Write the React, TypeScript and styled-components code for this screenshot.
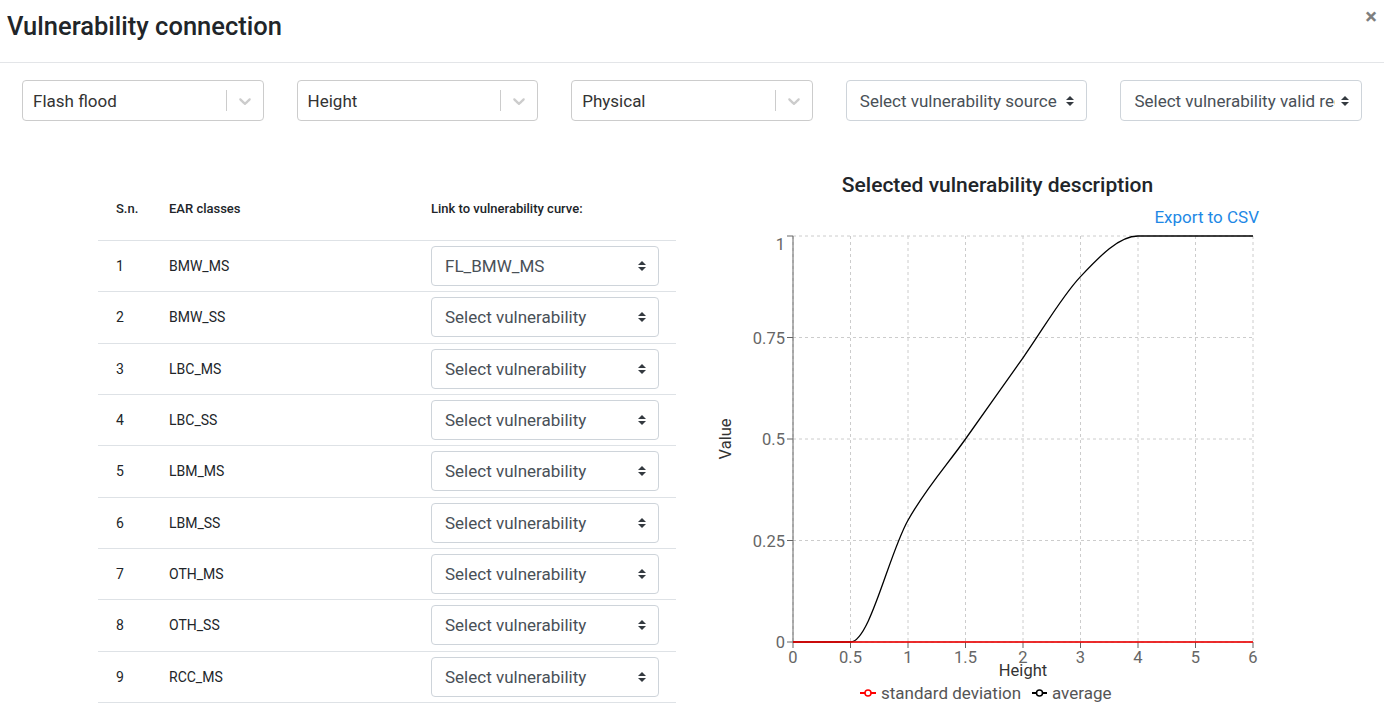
import React from "react";
import styled, { createGlobalStyle } from "styled-components";

const Global = createGlobalStyle`
  html, body { margin: 0; padding: 0; background: #fff; }
  body { font-family: Roboto, "Liberation Sans", sans-serif; color: #212529; overflow: hidden; }
  * { box-sizing: border-box; }
`;

const Page = styled.div`
  width: 1384px;
  height: 703px;
  overflow: hidden;
`;

const Header = styled.div`
  height: 63px;
  display: flex;
  justify-content: space-between;
  align-items: flex-start;
  padding: 0 7px;
  border-bottom: 1px solid #e3e5e8;
`;

const Title = styled.h1`
  margin: 0;
  padding-top: 10px;
  font-size: 25.5px;
  line-height: 32px;
  font-weight: 500;
  color: #212529;
`;

const Close = styled.span`
  padding-top: 6px;
  font-size: 22px;
  line-height: 1;
  font-weight: 700;
  color: #000;
  opacity: 0.5;
`;

const FilterBar = styled.div`
  display: grid;
  grid-template-columns: repeat(5, minmax(0, 1fr));
  gap: 33px;
  padding: 17px 22px 0;
`;

const Control = styled.div`
  height: 41px;
  display: flex;
  align-items: center;
  border: 1px solid hsl(0, 0%, 80%);
  border-radius: 4px;
  background: #fff;
`;

const ControlValue = styled.div`
  flex: 1;
  padding-left: 10px;
  font-size: 17px;
  color: hsl(0, 0%, 20%);
  white-space: nowrap;
  overflow: hidden;
`;

const Separator = styled.span`
  width: 1px;
  align-self: stretch;
  margin: 9px 0;
  background: hsl(0, 0%, 80%);
`;

const Indicator = styled.div`
  display: flex;
  padding: 8px;
  color: hsl(0, 0%, 80%);
`;

const NativeSelect = styled.div<{ $h: number }>`
  height: ${(p) => p.$h}px;
  display: flex;
  align-items: center;
  padding: 0 12px 0 13px;
  border: 1px solid #ced4da;
  border-radius: 4px;
  background: #fff;
  font-size: 17px;
  color: #495057;
  min-width: 0;
`;

const NativeText = styled.span`
  flex: 1;
  min-width: 0;
  margin-right: 6px;
  white-space: nowrap;
  overflow: hidden;
`;

const Content = styled.div`
  display: flex;
  align-items: flex-start;
  padding-left: 98px;
`;

const Table = styled.div`
  width: 578px;
  margin-top: 67px;
`;

const Row = styled.div<{ $head?: boolean }>`
  display: grid;
  grid-template-columns: 53px 262px 1fr;
  align-items: ${(p) => (p.$head ? "start" : "center")};
  height: ${(p) => (p.$head ? "53px" : "51.33px")};
  padding: ${(p) => (p.$head ? "12px 17px 0 18px" : "0 17px 0 18px")};
  border-bottom: 1px solid #dee2e6;
  font-size: ${(p) => (p.$head ? "13px" : "14px")};
  font-weight: ${(p) => (p.$head ? 500 : 400)};
  line-height: 18px;
  color: #212529;
`;

const ChartCol = styled.div`
  width: 585px;
  margin-left: 29px;
  margin-top: 52px;
  display: flex;
  flex-direction: column;
`;

const ChartTitle = styled.div`
  text-align: center;
  font-size: 21px;
  line-height: 24px;
  font-weight: 500;
  color: #212529;
`;

const Export = styled.a`
  align-self: flex-end;
  margin: 10px 31px 0 0;
  font-size: 17px;
  line-height: 20px;
  color: #1e88e5;
  text-decoration: none;
`;

const Arrows = () => (
  <svg width="8" height="12" viewBox="0 0 8 12" style={{ flex: "none" }}>
    <path d="M0 5 L4 1 L8 5 Z M0 7 L8 7 L4 11 Z" fill="#343a40" />
  </svg>
);

const Chevron = () => (
  <svg width="20" height="20" viewBox="0 0 20 20" fill="currentColor">
    <path d="M4.516 7.548c0.436-0.446 1.043-0.481 1.576 0l3.908 3.747 3.908-3.747c0.533-0.481 1.141-0.446 1.574 0 0.436 0.445 0.408 1.197 0 1.615-0.409 0.418-4.695 4.502-4.695 4.502-0.217 0.223-0.502 0.335-0.787 0.335s-0.57-0.112-0.789-0.335c0 0-4.287-4.084-4.695-4.502s-0.436-1.17 0-1.615z" />
  </svg>
);

const ReactSelect = ({ value }: { value: string }) => (
  <Control>
    <ControlValue>{value}</ControlValue>
    <Separator />
    <Indicator>
      <Chevron />
    </Indicator>
  </Control>
);

const Native = ({ value, h }: { value: string; h: number }) => (
  <NativeSelect $h={h}>
    <NativeText>{value}</NativeText>
    <Arrows />
  </NativeSelect>
);

const classes = ["BMW_MS", "BMW_SS", "LBC_MS", "LBC_SS", "LBM_MS", "LBM_SS", "OTH_MS", "OTH_SS", "RCC_MS"];

const cats = ["0", "0.5", "1", "1.5", "2", "3", "4", "5", "6"];
const avg = [0, 0, 0.3, 0.5, 0.7, 0.9, 1, 1, 1];
const X0 = 88;
const STEP = 57.5;
const YT = 9;
const YB = 415;
const px = (i: number) => X0 + i * STEP;
const py = (v: number) => YB - v * (YB - YT);

function monotonePath(xs: number[], ys: number[]) {
  const n = xs.length;
  const sign = (v: number) => (v < 0 ? -1 : 1);
  const t: number[] = new Array(n).fill(0);
  for (let i = 1; i < n - 1; i++) {
    const h0 = xs[i] - xs[i - 1];
    const h1 = xs[i + 1] - xs[i];
    const s0 = (ys[i] - ys[i - 1]) / h0;
    const s1 = (ys[i + 1] - ys[i]) / h1;
    const p = (s0 * h1 + s1 * h0) / (h0 + h1);
    t[i] = (sign(s0) + sign(s1)) * Math.min(Math.abs(s0), Math.abs(s1), 0.5 * Math.abs(p)) || 0;
  }
  const hs = xs[1] - xs[0];
  t[0] = (3 * (ys[1] - ys[0]) / hs - t[1]) / 2;
  const he = xs[n - 1] - xs[n - 2];
  t[n - 1] = (3 * (ys[n - 1] - ys[n - 2]) / he - t[n - 2]) / 2;
  let d = `M${xs[0]},${ys[0]}`;
  for (let i = 0; i < n - 1; i++) {
    const dx = (xs[i + 1] - xs[i]) / 3;
    d += ` C${xs[i] + dx},${ys[i] + dx * t[i]} ${xs[i + 1] - dx},${ys[i + 1] - dx * t[i + 1]} ${xs[i + 1]},${ys[i + 1]}`;
  }
  return d;
}

const Chart = () => {
  const xs = cats.map((_, i) => px(i));
  const ys = avg.map(py);
  const yTicks = [0, 0.25, 0.5, 0.75, 1];
  const font = { fontFamily: "Roboto, 'Liberation Sans', sans-serif", fontSize: 16.5 };
  const legendFont = { fontFamily: "Roboto, 'Liberation Sans', sans-serif", fontSize: 17 };
  return (
    <svg width="585" height="475" viewBox="0 0 585 475" style={{ display: "block" }}>
      {yTicks.map((v) => (
        <line key={"h" + v} x1={X0} x2={px(8)} y1={py(v)} y2={py(v)} stroke="#ccc" strokeDasharray="3 3" />
      ))}
      {cats.map((c, i) => (
        <line key={"v" + c} x1={px(i)} x2={px(i)} y1={YT} y2={YB} stroke="#ccc" strokeDasharray="3 3" />
      ))}
      <line x1={X0} x2={X0} y1={YT} y2={YB} stroke="#666" />
      <line x1={X0} x2={px(8)} y1={YB} y2={YB} stroke="#666" />
      {yTicks.map((v) => (
        <g key={"t" + v}>
          <line x1={X0 - 6} x2={X0} y1={py(v)} y2={py(v)} stroke="#666" />
          <text x={X0 - 8} y={py(v) + (v === 1 ? 14 : 6)} textAnchor="end" fill="#666" {...font}>
            {String(v)}
          </text>
        </g>
      ))}
      {cats.map((c, i) => (
        <g key={"x" + c}>
          <line x1={px(i)} x2={px(i)} y1={YB} y2={YB + 6} stroke="#666" />
          <text x={px(i)} y={436} textAnchor="middle" fill="#666" {...font}>
            {c}
          </text>
        </g>
      ))}
      <text x={318} y={449} textAnchor="middle" fill="#333" {...font}>Height</text>
      <text x={0} y={0} transform="translate(26,212) rotate(-90)" textAnchor="middle" fill="#333" {...font}>
        Value
      </text>
      <path d={monotonePath(xs, ys)} fill="none" stroke="#000" strokeWidth={1.3} />
      <line x1={X0} x2={px(8)} y1={YB} y2={YB} stroke="#ff0000" strokeWidth={1.5} />
      <g>
        <line x1={155} x2={171} y1={466} y2={466} stroke="#ff0000" strokeWidth={2} />
        <circle cx={163} cy={466} r={3} fill="#fff" stroke="#ff0000" strokeWidth={1.5} />
        <text x={176} y={472} fill="#555" {...legendFont}>standard deviation</text>
        <line x1={327} x2={342} y1={466} y2={466} stroke="#000" strokeWidth={2} />
        <circle cx={334.5} cy={466} r={3} fill="#fff" stroke="#000" strokeWidth={1.5} />
        <text x={347} y={472} fill="#555" {...legendFont}>average</text>
      </g>
    </svg>
  );
};

export default function App() {
  return (
    <Page>
      <Global />
      <Header>
        <Title>Vulnerability connection</Title>
        <Close>×</Close>
      </Header>
      <FilterBar>
        <ReactSelect value="Flash flood" />
        <ReactSelect value="Height" />
        <ReactSelect value="Physical" />
        <Native value="Select vulnerability source" h={41} />
        <Native value="Select vulnerability valid region" h={41} />
      </FilterBar>
      <Content>
        <Table>
          <Row $head>
            <span>S.n.</span>
            <span>EAR classes</span>
            <span>Link to vulnerability curve:</span>
          </Row>
          {classes.map((c, i) => (
            <Row key={c}>
              <span>{i + 1}</span>
              <span>{c}</span>
              <Native value={i === 0 ? "FL_BMW_MS" : "Select vulnerability"} h={40} />
            </Row>
          ))}
        </Table>
        <ChartCol>
          <ChartTitle>Selected vulnerability description</ChartTitle>
          <Export href="#">Export to CSV</Export>
          <Chart />
        </ChartCol>
      </Content>
    </Page>
  );
}
